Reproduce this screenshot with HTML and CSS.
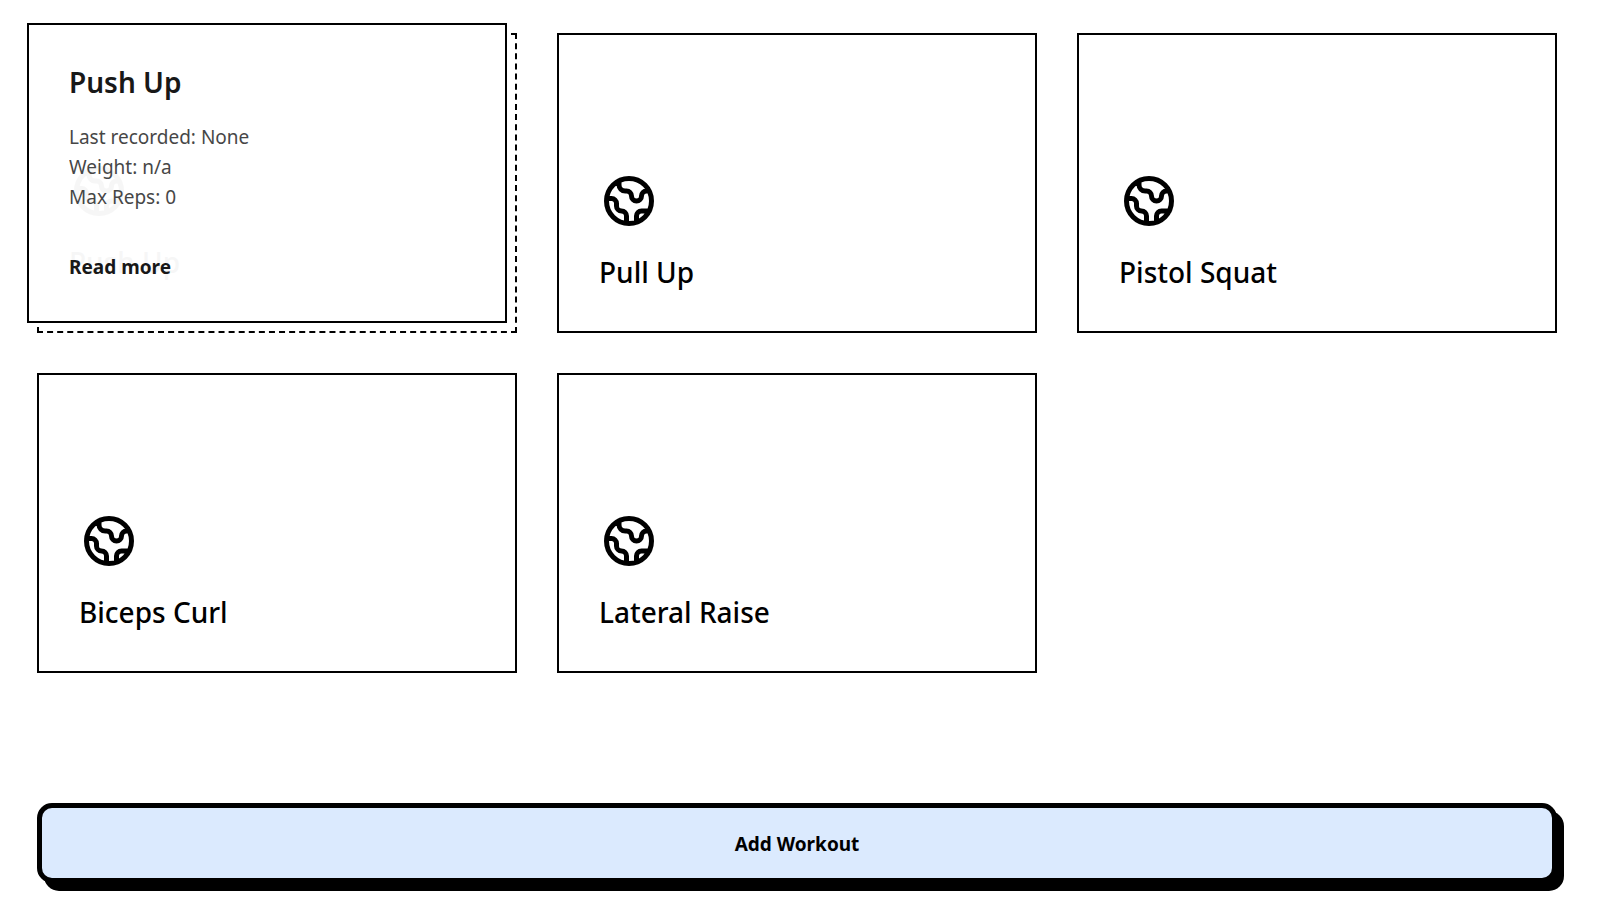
FILE: index.html
```
<!DOCTYPE html>
<html lang="en">
<head>
<meta charset="utf-8">
<title>Workouts</title>
<link rel="stylesheet" href="styles.css">
</head>
<body>
<svg class="sprite" aria-hidden="true">
  <symbol id="globe" viewBox="0 0 24 24">
    <path d="M3.055 11H5a2 2 0 012 2v1a2 2 0 002 2 2 2 0 012 2v2.945M8 3.935V5.5A2.5 2.5 0 0010.5 8h.5a2 2 0 012 2 2 2 0 104 0 2 2 0 012-2h1.064M15 20.488V18a2 2 0 012-2h3.064M21 12a9 9 0 11-18 0 9 9 0 0118 0z" fill="none" stroke="currentColor" stroke-width="2" stroke-linecap="round" stroke-linejoin="round"/>
  </symbol>
</svg>
<main class="page">
  <section class="grid">
    <article class="slot slot-open">
      <div class="card card-raised">
        <div class="cover cover-faded" aria-hidden="true">
          <svg class="icon"><use href="#globe"/></svg>
          <div class="title">Push Up</div>
        </div>
        <div class="details">
          <h2 class="title">Push Up</h2>
          <p class="stats">Last recorded: None<br>Weight: n/a<br>Max Reps: 0</p>
          <a class="more" href="#push-up">Read more</a>
        </div>
      </div>
    </article>
    <article class="slot"><div class="card"><div class="cover"><svg class="icon" aria-hidden="true"><use href="#globe"/></svg><h2 class="title">Pull Up</h2></div></div></article>
    <article class="slot"><div class="card"><div class="cover"><svg class="icon" aria-hidden="true"><use href="#globe"/></svg><h2 class="title">Pistol Squat</h2></div></div></article>
    <article class="slot"><div class="card"><div class="cover"><svg class="icon" aria-hidden="true"><use href="#globe"/></svg><h2 class="title">Biceps Curl</h2></div></div></article>
    <article class="slot"><div class="card"><div class="cover"><svg class="icon" aria-hidden="true"><use href="#globe"/></svg><h2 class="title">Lateral Raise</h2></div></div></article>
  </section>
  <button class="add" type="button">Add Workout</button>
</main>
</body>
</html>
```
FILE: styles.css
```
* {
  box-sizing: border-box;
}

body {
  margin: 0;
  background: #fff;
  color: #000;
  font-family: "Segoe UI", "Noto Sans", sans-serif;
  font-size: 19px;
  line-height: 30px;
}

.sprite {
  position: absolute;
  width: 0;
  height: 0;
}

.page {
  display: flex;
  flex-direction: column;
  gap: 130px;
  padding: 33px 41px 20px 37px;
}

.grid {
  display: grid;
  grid-template-columns: repeat(3, 1fr);
  grid-auto-rows: minmax(300px, auto);
  gap: 40px;
}

.slot {
  display: grid;
}

.slot-open {
  border: 2px dashed #000;
}

.card {
  display: grid;
  padding: 40px;
  border: 2px solid #000;
  background: #fff;
}

.card-raised {
  margin: -2px;
  transform: translate(-10px, -10px);
}

.cover,
.details {
  grid-area: 1 / 1;
}

.cover {
  display: flex;
  flex-direction: column;
  justify-content: flex-end;
  gap: 22px;
}

.cover-faded {
  opacity: 0.03;
}

.details {
  opacity: 0.9;
}

.icon {
  width: 60px;
  height: 60px;
}

.title {
  margin: 0;
  font-size: 28px;
  font-weight: 500;
  line-height: 38px;
}

.details .title {
  font-weight: 600;
  line-height: 34px;
}

.stats {
  margin: 23px 0 43px;
  color: #333;
}

.more {
  display: block;
  color: inherit;
  font-weight: 700;
  line-height: 24px;
  text-decoration: none;
}

.add {
  width: 100%;
  padding: 21px 20px 19px;
  border: 5px solid #000;
  border-radius: 15px;
  background: #dbeafe;
  box-shadow: 7px 8px 0 #000;
  color: inherit;
  font: inherit;
  font-weight: 700;
}
```
